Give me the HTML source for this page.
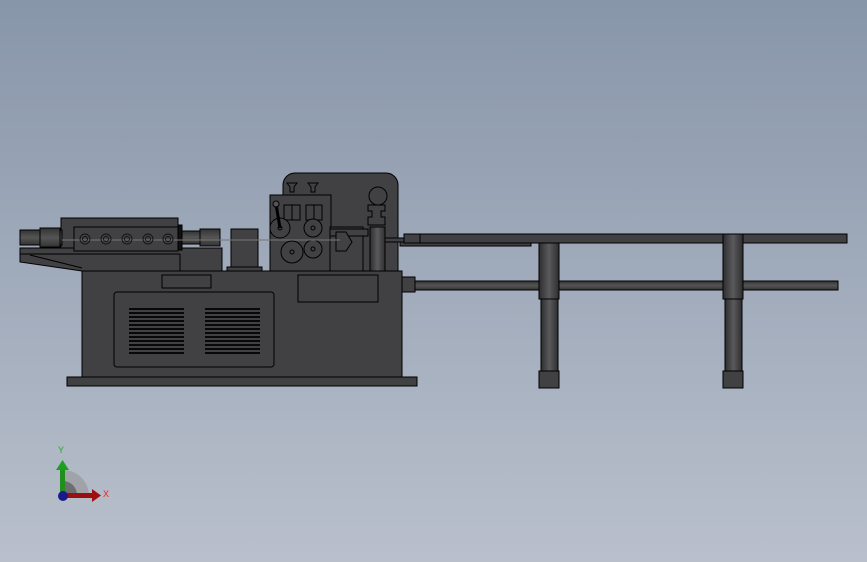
<!DOCTYPE html>
<html><head><meta charset="utf-8"><style>
html,body{margin:0;padding:0;}
body{width:867px;height:562px;overflow:hidden;background:linear-gradient(#8896aa,#b9c0cc);font-family:"Liberation Sans",sans-serif;}
svg{position:absolute;left:0;top:0}
</style></head><body>
<svg width="867" height="562" viewBox="0 0 867 562">
<defs>
<linearGradient id="leg" x1="0" x2="1"><stop offset="0" stop-color="#2e2e30"/><stop offset=".5" stop-color="#5a5a5c"/><stop offset="1" stop-color="#2e2e30"/></linearGradient>
<linearGradient id="bar" x1="0" y1="0" x2="0" y2="1"><stop offset="0" stop-color="#333"/><stop offset=".5" stop-color="#555"/><stop offset="1" stop-color="#333"/></linearGradient>
</defs>
<g stroke="#000" stroke-width="1" fill="#414143">
<rect x="400" y="241" width="131" height="5"/>
<rect x="418" y="234" width="429" height="9"/>
<rect x="415" y="281" width="423" height="9" fill="url(#bar)"/>
<rect x="402" y="277" width="13" height="15"/>
<rect x="539" y="243" width="20" height="56" fill="url(#leg)"/>
<rect x="541" y="299" width="17" height="72" fill="url(#leg)"/>
<rect x="539" y="371" width="20" height="17"/>
<rect x="723" y="234" width="20" height="65" fill="url(#leg)"/>
<rect x="725" y="299" width="17" height="72" fill="url(#leg)"/>
<rect x="723" y="371" width="20" height="17"/>
<rect x="67" y="377" width="350" height="9"/>
<rect x="82" y="271" width="320" height="106"/>
<rect x="162" y="275" width="49" height="13"/>
<rect x="298" y="275" width="80" height="27"/>
<rect x="114" y="292" width="160" height="75" rx="3"/>
<polygon points="20,248 222,248 222,271 82,271 20,262"/>
<line x1="20" y1="254" x2="180" y2="254"/>
<line x1="180" y1="254" x2="180" y2="271"/>
<line x1="30" y1="255" x2="82" y2="268"/>
<rect x="61" y="218" width="117" height="30"/>
<rect x="74" y="227" width="104" height="24"/>
<rect x="20" y="230" width="42" height="15" fill="url(#bar)"/>
<rect x="40" y="228" width="20" height="19" fill="url(#bar)"/>
<rect x="182" y="231" width="20" height="13" fill="url(#bar)"/>
<rect x="200" y="229" width="20" height="17" fill="url(#bar)"/>
<rect x="178" y="225" width="4" height="25" fill="#111"/>
<rect x="231" y="229" width="27" height="42"/>
<rect x="227" y="267" width="35" height="4"/>
<path d="M283 271 V185 a12 12 0 0 1 12 -12 H386 a12 12 0 0 1 12 12 V271 Z"/>
<rect x="270" y="195" width="61" height="76"/>
<rect x="330" y="227" width="33" height="44"/>
<rect x="370" y="227" width="15" height="44" fill="url(#leg)"/>
<rect x="385" y="238" width="35" height="4"/>
<rect x="404" y="234" width="16" height="9"/>
<rect x="330" y="229" width="38" height="7"/>
<polygon points="336,232 346,232 352,242 346,251 336,251"/>
<rect x="284" y="205" width="16" height="15"/>
<line x1="292" y1="205" x2="292" y2="220"/>
<rect x="306" y="205" width="16" height="15"/>
<line x1="314" y1="205" x2="314" y2="220"/>
<circle cx="280" cy="228" r="10"/>
<circle cx="313" cy="228" r="9"/>
<circle cx="292" cy="252" r="11"/>
<circle cx="313" cy="249" r="9"/>
<circle cx="280" cy="228" r="2"/><circle cx="313" cy="228" r="2"/><circle cx="292" cy="252" r="2"/><circle cx="313" cy="249" r="2"/>
<line x1="276" y1="204" x2="280" y2="228" stroke-width="3"/>
<circle cx="276" cy="204" r="3" fill="#555"/>
<path d="M287 183 h10 l-3 4 v5 h-4 v-5 z M308 183 h10 l-3 4 v5 h-4 v-5 z"/>
<circle cx="378" cy="196" r="9"/>
<path d="M368 205 h17 v6 h-4 v6 h4 v8 h-17 v-8 h4 v-6 h-4 z"/>
</g>
<line x1="62" y1="240" x2="340" y2="240" stroke="#777" stroke-width="1"/>
<g fill="none" stroke="#111" stroke-width="0.9">
<circle cx="85" cy="239" r="5"/><circle cx="106" cy="239" r="5"/><circle cx="127" cy="239" r="5"/><circle cx="148" cy="239" r="5"/><circle cx="168" cy="239" r="5"/>
<circle cx="85" cy="239" r="2.5"/><circle cx="106" cy="239" r="2.5"/><circle cx="127" cy="239" r="2.5"/><circle cx="148" cy="239" r="2.5"/><circle cx="168" cy="239" r="2.5"/>
</g>
<g stroke="#000" stroke-width="1.8">
<path d="M129 309H184M129 313H184M129 317H184M129 321H184M129 325H184M129 329H184M129 333H184M129 337H184M129 341H184M129 345H184M129 349H184M129 353H184"/>
<path d="M205 309H260M205 313H260M205 317H260M205 321H260M205 325H260M205 329H260M205 333H260M205 337H260M205 341H260M205 345H260M205 349H260M205 353H260"/>
</g>
<path d="M63 495 L63 470 A26 26 0 0 1 89 495 Z" fill="#a0a3a8"/>
<path d="M63 495 L63 481 A14 14 0 0 1 77 495 Z" fill="#6c6e72"/>
<rect x="60" y="468" width="5" height="27" fill="#1f8f1f"/>
<polygon points="56,470 62.5,460 69,470" fill="#1f9f1f"/>
<rect x="63" y="493" width="30" height="5" fill="#9a1010"/>
<polygon points="92,489 101,495.5 92,502" fill="#a01010"/>
<circle cx="63" cy="496" r="5" fill="#1a1a8a"/>
<text x="58" y="453" font-size="9" fill="#2a2">Y</text>
<text x="103" y="497" font-size="9" fill="#e22">X</text>
</svg>
</body></html>
